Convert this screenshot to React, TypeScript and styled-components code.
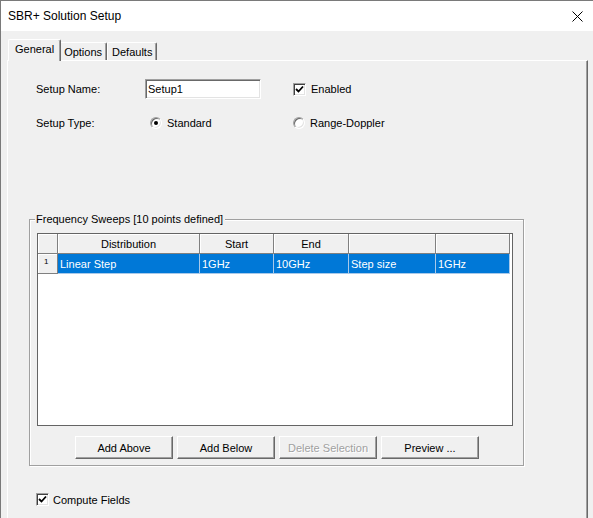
import React from 'react';
import styled, { createGlobalStyle, css } from 'styled-components';

const GlobalStyle = createGlobalStyle`
  html, body {
    margin: 0;
    padding: 0;
    background: #ffffff;
  }
  body {
    font-family: "Liberation Sans", Arial, sans-serif;
    font-size: 11px;
    color: #000;
  }
`;

const Window = styled.div`
  width: 593px;
  height: 518px;
  box-sizing: border-box;
  border-top: 1px solid #7a7a7a;
  border-left: 1px solid #7a7a7a;
  display: flex;
  flex-direction: column;
  overflow: hidden;
`;

const TitleBar = styled.div`
  height: 30px;
  flex: none;
  background: #ffffff;
  display: flex;
  align-items: center;
  justify-content: space-between;
  padding: 0 10px 0 7px;
`;

const Title = styled.span`
  font-size: 12px;
  color: #000;
`;

const CloseIcon = styled.svg`
  width: 11px;
  height: 11px;
  display: block;
`;

const Body = styled.div`
  flex: 1;
  background: #f0f0f0;
  padding: 8px 5px 0 6px;
  display: flex;
  flex-direction: column;
`;

const TabStrip = styled.div`
  height: 21px;
  display: flex;
  align-items: flex-end;
  padding-left: 3px;
  position: relative;
  z-index: 1;
`;

const Tab = styled.div<{ $active?: boolean }>`
  box-sizing: border-box;
  height: 18px;
  padding: 0 4px;
  display: flex;
  align-items: center;
  border-top: 1px solid #ffffff;
  border-left: 1px solid #ffffff;
  border-right: 1px solid #696969;
  box-shadow: inset -1px 0 0 #a0a0a0;
  border-radius: 2px 2px 0 0;
  background: #f0f0f0;
  ${({ $active }) =>
    $active &&
    css`
      height: 22px;
      margin: 0 -2px -1px -2px;
      padding: 0 6px 3px 6px;
      position: relative;
      z-index: 2;
    `}
`;

const Panel = styled.div`
  flex: 1;
  border-top: 1px solid #ffffff;
  border-left: 1px solid #ffffff;
  border-right: 1px solid #696969;
  box-shadow: inset -1px 0 0 #a0a0a0;
  padding: 18px 0 0 21px;
`;

const Form = styled.div`
  display: grid;
  grid-template-columns: 109px 148px auto;
  grid-auto-rows: 20px;
  row-gap: 14px;
  padding-left: 7px;
  align-items: center;
`;

const Label = styled.span`
  white-space: nowrap;
`;

const TextBox = styled.input`
  box-sizing: border-box;
  width: 116px;
  height: 20px;
  margin: 0;
  padding: 0 2px;
  font: inherit;
  color: #000;
  background: #ffffff;
  border: 1px solid;
  border-color: #a0a0a0 #ffffff #ffffff #a0a0a0;
  box-shadow: inset 1px 1px 0 #696969, inset -1px -1px 0 #e3e3e3;
  outline: none;
`;

const Option = styled.label<{ $indent?: number }>`
  display: flex;
  align-items: center;
  gap: 5px;
  margin-left: ${({ $indent }) => $indent ?? 0}px;
  white-space: nowrap;
`;

const CheckBox = styled.span`
  box-sizing: border-box;
  width: 13px;
  height: 13px;
  flex: none;
  background: #ffffff;
  border: 1px solid;
  border-color: #a0a0a0 #ffffff #ffffff #a0a0a0;
  box-shadow: inset 1px 1px 0 #404040, inset -1px -1px 0 #e3e3e3;
  display: flex;
  align-items: center;
  justify-content: center;
`;

const CheckMark = styled.svg`
  width: 9px;
  height: 9px;
  display: block;
`;

const Radio = styled.span<{ $checked?: boolean }>`
  box-sizing: border-box;
  width: 12px;
  height: 12px;
  flex: none;
  border-radius: 50%;
  background: #ffffff;
  border: 1px solid;
  border-color: #a0a0a0 #ffffff #ffffff #a0a0a0;
  box-shadow: inset 1px 1px 0 #696969, inset -1px -1px 0 #e3e3e3;
  display: flex;
  align-items: center;
  justify-content: center;
  &::after {
    content: '';
    width: 4px;
    height: 4px;
    border-radius: 50%;
    background: ${({ $checked }) => ($checked ? '#000' : 'transparent')};
  }
`;

const GroupBox = styled.div`
  position: relative;
  box-sizing: border-box;
  width: 495px;
  margin-top: 86px;
  border: 1px solid #a0a0a0;
  box-shadow: inset 1px 1px 0 #ffffff, 1px 1px 0 #ffffff;
  padding: 13px 11px 6px 7px;
`;

const GroupLegend = styled.span`
  position: absolute;
  top: -7px;
  left: 5px;
  padding: 0 2px 0 1px;
  background: #f0f0f0;
  line-height: 13px;
  white-space: nowrap;
`;

const SweepGrid = styled.div`
  box-sizing: border-box;
  width: 476px;
  height: 193px;
  background: #ffffff;
  border: 1px solid #646464;
`;

const GridRow = styled.div`
  display: grid;
  grid-template-columns: 20px 142px 74px 75px 87px 74px;
  height: 20px;
`;

const HeaderCell = styled.div`
  box-sizing: border-box;
  background: #f0f0f0;
  border-right: 1px solid #808080;
  border-bottom: 1px solid #808080;
  box-shadow: inset 1px 1px 0 #ffffff;
  display: flex;
  align-items: center;
  justify-content: center;
  white-space: nowrap;
`;

const RowHeader = styled(HeaderCell)`
  align-items: flex-start;
  justify-content: flex-start;
  padding: 3px 0 0 6px;
  font-size: 8px;
`;

const Cell = styled.div<{ $selected?: boolean }>`
  box-sizing: border-box;
  background: ${({ $selected }) => ($selected ? '#0078d7' : '#ffffff')};
  color: ${({ $selected }) => ($selected ? '#ffffff' : '#000')};
  border-right: 1px solid #a9c9e9;
  border-bottom: 1px solid #a9c9e9;
  display: flex;
  align-items: center;
  padding-left: 2px;
  white-space: nowrap;
`;

const ButtonRow = styled.div`
  display: flex;
  justify-content: center;
  gap: 4px;
  margin-top: 10px;
  padding-left: 5px;
`;

const Button = styled.button`
  box-sizing: border-box;
  width: 98px;
  height: 23px;
  margin: 0;
  padding: 0;
  font: inherit;
  color: #000;
  background: #f0f0f0;
  border: 1px solid;
  border-color: #ffffff #696969 #696969 #ffffff;
  box-shadow: inset -1px -1px 0 #a0a0a0;
  &:disabled {
    color: #a0a0a0;
    text-shadow: 1px 1px 0 #ffffff;
  }
`;

const FooterOption = styled(Option)`
  margin-top: 27px;
  margin-left: 7px;
  gap: 4px;
`;

const Check: React.FC = () => (
  <CheckBox>
    <CheckMark viewBox="0 0 9 9">
      <path d="M1 4 L3.5 6.5 L8 1.5" fill="none" stroke="#000" strokeWidth="1.8" />
    </CheckMark>
  </CheckBox>
);

const columns = ['Distribution', 'Start', 'End', '', ''];
const sweep = ['Linear Step', '1GHz', '10GHz', 'Step size', '1GHz'];

export default function App() {
  return (
    <>
      <GlobalStyle />
      <Window>
        <TitleBar>
          <Title>SBR+ Solution Setup</Title>
          <CloseIcon viewBox="0 0 11 11">
            <path d="M0.5 0.5 L10.5 10.5 M10.5 0.5 L0.5 10.5" stroke="#000" strokeWidth="1" />
          </CloseIcon>
        </TitleBar>
        <Body>
          <TabStrip>
            <Tab $active>General</Tab>
            <Tab>Options</Tab>
            <Tab>Defaults</Tab>
          </TabStrip>
          <Panel>
            <Form>
              <Label>Setup Name:</Label>
              <TextBox readOnly defaultValue="Setup1" />
              <Option>
                <Check />
                Enabled
              </Option>
              <Label>Setup Type:</Label>
              <Option $indent={5}>
                <Radio $checked />
                Standard
              </Option>
              <Option>
                <Radio />
                Range-Doppler
              </Option>
            </Form>
            <GroupBox>
              <GroupLegend>Frequency Sweeps [10 points defined]</GroupLegend>
              <SweepGrid>
                <GridRow>
                  <HeaderCell />
                  {columns.map((c, i) => (
                    <HeaderCell key={i}>{c}</HeaderCell>
                  ))}
                </GridRow>
                <GridRow>
                  <RowHeader>1</RowHeader>
                  {sweep.map((v, i) => (
                    <Cell key={i} $selected>
                      {v}
                    </Cell>
                  ))}
                </GridRow>
              </SweepGrid>
              <ButtonRow>
                <Button>Add Above</Button>
                <Button>Add Below</Button>
                <Button disabled>Delete Selection</Button>
                <Button>Preview ...</Button>
              </ButtonRow>
            </GroupBox>
            <FooterOption>
              <Check />
              Compute Fields
            </FooterOption>
          </Panel>
        </Body>
      </Window>
    </>
  );
}
